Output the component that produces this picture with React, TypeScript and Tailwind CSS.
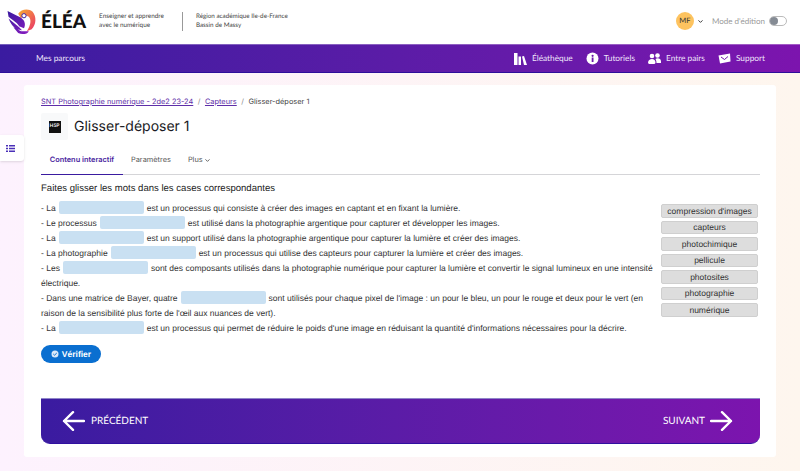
import React from "react";
import { ChevronDown } from "lucide-react";

const Blank = () => <span className="inline-block w-[85px] h-[13px] bg-[#c9e0f2] rounded-[2px] mx-[3px] align-[-3px]" />;

const Logo = () => (
  <svg width="32" height="27" viewBox="0 0 32 28" className="shrink-0">
    <defs>
      <linearGradient id="lg1" x1="0" y1="0" x2="1" y2="1">
        <stop offset="0" stopColor="#3a1aa0" />
        <stop offset="1" stopColor="#8a1cc0" />
      </linearGradient>
      <linearGradient id="lg2" x1="0" y1="0" x2="1" y2="1">
        <stop offset="0" stopColor="#f8b030" />
        <stop offset="1" stopColor="#e8306a" />
      </linearGradient>
    </defs>
    <path d="M11 6 C14 1 22 0 26 4 C30 9 30 17 25 22 L20 24 C24 18 25 12 22 9 C19 7 15 8 14 11 Z" fill="url(#lg2)" />
    <path d="M0 3 L14 10 C18 13 19 17 17 21 L12 19 C11 16 6 13 1 9 Z M1 11 L12 20 L15 23 L9 22 C6 20 3 16 1 11 Z M6 20 L14 24 L22 24 C21 27 15 28 11 26 Z" fill="url(#lg1)" />
    <circle cx="17" cy="8" r="2.2" fill="#fff" stroke="#3a1aa0" strokeWidth="1" />
  </svg>
);

const NavItem = ({ icon, label }: { icon: React.ReactNode; label: string }) => (
  <div className="flex items-center gap-[5px]">
    {icon}
    <span>{label}</span>
  </div>
);

const rows = ["compression d'images", "capteurs", "photochimique", "pellicule", "photosites", "photographie", "numérique"];

export default function App() {
  return (
    <div className="w-[800px] h-[471px] overflow-hidden flex flex-col bg-gradient-to-r from-[#fdf2fe] to-[#fef6ee] font-['Lato',sans-serif] relative [text-rendering:geometricPrecision]">
      <header className="h-[44px] bg-white flex items-center shrink-0 pl-[7px] pr-[13px] pb-[2px]">
        <Logo />
        <span className="ml-[2px] text-[19px] leading-none font-black text-[#111]">ÉLÉA</span>
        <div className="ml-[13px] text-[6.4px] leading-[9.5px] text-[#444]">
          <div>Enseigner et apprendre</div>
          <div>avec le numérique</div>
        </div>
        <div className="ml-[18px] w-px h-[19px] bg-[#999]" />
        <div className="ml-[13px] text-[6.3px] leading-[9.5px] text-[#444]">
          <div>Région académique Ile-de-France</div>
          <div>Bassin de Massy</div>
        </div>
        <div className="ml-auto flex items-center">
          <div className="w-[18px] h-[18px] rounded-full bg-[#fdc35f] text-[#333] text-[7.5px] flex items-center justify-center">MF</div>
          <ChevronDown size={7} strokeWidth={3} className="ml-[3px] text-[#222]" />
          <span className="ml-[8px] text-[8px] text-[#999]">Mode d'édition</span>
          <div className="ml-[4px] w-[18px] h-[10px] rounded-full border border-[#bbb] bg-white flex items-center">
            <div className="w-[8px] h-[8px] rounded-full bg-[#858b94]" />
          </div>
        </div>
      </header>
      <nav className="h-[29px] shrink-0 border-y border-t-white/30 border-b-[#2d0f9a] bg-gradient-to-r from-[#3a1ba0] to-[#7c14ae] flex items-center pl-[36px] pr-[35px] text-[#f0e6fb] text-[8.3px]">
        <span>Mes parcours</span>
        <div className="ml-auto flex items-center gap-[13px]">
          <NavItem label="Éléathèque" icon={
            <svg width="13" height="12" viewBox="0 0 13 12" fill="#fff"><path d="M0 0h3.500v12H0zM4.500 3.500h2.500v8.500H4.500zM8 3.500l2-.5L13 12h-3z" /></svg>
          } />
          <NavItem label="Tutoriels" icon={
            <svg width="13" height="13" viewBox="0 0 13 13"><circle cx="6.500" cy="6.500" r="6" fill="#fff" /><rect x="5.700" y="5.500" width="1.800" height="4.500" fill="#6a18aa" /><circle cx="6.600" cy="3.800" r="1.100" fill="#6a18aa" /></svg>
          } />
          <NavItem label="Entre pairs" icon={
            <svg width="13" height="11" viewBox="0 0 13 11" fill="#fff"><circle cx="4" cy="3" r="2.300" /><circle cx="9.500" cy="2.500" r="2.300" /><path d="M0 10c0-3 2-4 4-4s3.500 1 3.500 4l-1 1h-5.500zM8.500 10c0-2-.5-3-1-4 2-1.500 5.500-.8 5.500 2.500v1.500z" /></svg>
          } />
          <NavItem label="Support" icon={
            <svg width="13" height="11" viewBox="0 0 13 11"><path d="M0.500 2.500L12 0.500L12.500 8.500L2 10.500Z" fill="#fff" /><path d="M3 4l3.500 2.500L10 3.500" fill="none" stroke="#7016ac" strokeWidth="1" /></svg>
          } />
        </div>
      </nav>

      <div className="absolute left-0 top-[135px] w-[24px] h-[26px] bg-white rounded-r-[3px] flex items-center pl-[6px] shadow-sm">
        <svg width="9" height="7" viewBox="0 0 9 7" fill="#4a30b8"><path d="M0 0h2v1.500H0zM3 0h6v1.500H3zM0 2.700h2v1.500H0zM3 2.700h6v1.500H3zM0 5.400h2v1.500H0zM3 5.400h6v1.500H3z" /></svg>
      </div>

      <main className="mt-[12px] mx-[24px] h-[372px] bg-white rounded-[3px] pl-[17px] pr-[16px] pt-[11px] flex flex-col">
        <div className="text-[7.4px] leading-[12px] font-['Inter',sans-serif] flex items-center text-[#444]">
          <span className="text-[#5e2ea8] underline">SNT Photographie numérique - 2de2 23-24</span>
          <span className="mx-[4.5px] text-[#888]">/</span>
          <span className="text-[#5e2ea8] underline">Capteurs</span>
          <span className="mx-[4.5px] text-[#888]">/</span>
          <span>Glisser-déposer 1</span>
        </div>
        <div className="flex items-center mt-[5px] h-[27px]">
          <div className="w-[27px] h-[27px] bg-[#f8f9fa] rounded-[2px] flex items-center justify-center">
            <div className="w-[12px] h-[12px] bg-[#111] text-white text-[5px] font-bold leading-none flex items-center justify-center">H5P</div>
          </div>
          <h1 className="ml-[6px] text-[14px] font-normal leading-none text-[#1a1a24] font-['Inter',sans-serif]">Glisser-déposer 1</h1>
        </div>
        <div className="mt-[6px] h-[29px] border-b border-[#d5d5d8] flex text-[7.4px] font-['Inter',sans-serif] text-[#555]">
          <div className="w-[82px] h-[29px] border-b-[1.5px] border-[#3a1ba0] flex items-center justify-center font-semibold text-[#4a1fa0]">Contenu interactif</div>
          <div className="ml-[8px] flex items-center">Paramètres</div>
          <div className="ml-[17px] flex items-center">Plus<ChevronDown size={7} strokeWidth={3} className="ml-[1px]" /></div>
        </div>
        <div className="mt-[8px] text-[9.55px] leading-[12px] font-['Liberation_Sans',sans-serif] text-[#222]">Faites glisser les mots dans les cases correspondantes</div>

        <div className="mt-[6px] flex font-['Liberation_Sans',sans-serif] text-[8.5px] leading-[15px] text-[#333]">
          <div className="w-[612px] shrink-0">
            <div>- La<Blank />est un processus qui consiste à créer des images en captant et en fixant la lumière.</div>
            <div>- Le processus<Blank />est utilisé dans la photographie argentique pour capturer et développer les images.</div>
            <div>- La<Blank />est un support utilisé dans la photographie argentique pour capturer la lumière et créer des images.</div>
            <div>- La photographie<Blank />est un processus qui utilise des capteurs pour capturer la lumière et créer des images.</div>
            <div>- Les<Blank />sont des composants utilisés dans la photographie numérique pour capturer la lumière et convertir le signal lumineux en une intensité électrique.</div>
            <div>- Dans une matrice de Bayer, quatre<Blank />sont utilisés pour chaque pixel de l'image : un pour le bleu, un pour le rouge et deux pour le vert (en raison de la sensibilité plus forte de l'œil aux nuances de vert).</div>
            <div>- La<Blank />est un processus qui permet de réduire le poids d'une image en réduisant la quantité d'informations nécessaires pour la décrire.</div>
          </div>
          <div className="ml-[8px] w-[97px] flex flex-col gap-[3px] mt-[3px]">
            {rows.map((r) => (
              <div key={r} className="h-[13.5px] bg-[#dddddd] border border-[#cfcfcf] rounded-[2px] flex items-center justify-center text-[8.5px] leading-none text-[#333]">{r}</div>
            ))}
          </div>
        </div>

        <div className="mt-[9px] w-[60px] h-[18px] rounded-full bg-[#0a6fd0] text-white text-[8.500px] font-bold font-['Liberation_Sans',sans-serif] flex items-center justify-center gap-[3px]">
          <svg width="8" height="8" viewBox="0 0 8 8"><circle cx="4" cy="4" r="3.500" fill="#dbe9f8" /><path d="M2.300 4l1.200 1.200L5.800 3" fill="none" stroke="#0a6fd0" strokeWidth="1" /></svg>
          Vérifier
        </div>

        <div className="mt-[35px] h-[46px] rounded-b-[9px] border-t border-b border-t-[#8f86c8] border-b-[#3010a0] bg-gradient-to-r from-[#3a1ba0] to-[#7c14ae] flex items-center justify-between pl-[21px] pr-[27px] text-white text-[10px]">
          <div className="flex items-center gap-[6px]">
            <svg width="23" height="20" viewBox="0 0 23 20" fill="none" stroke="#fff" strokeWidth="2.400" strokeLinecap="round" strokeLinejoin="round"><path d="M22 10H2M11 1.200L2 10l9 8.800" /></svg>
            <span>PRÉCÉDENT</span>
          </div>
          <div className="flex items-center gap-[5px]">
            <span>SUIVANT</span>
            <svg width="23" height="20" viewBox="0 0 23 20" fill="none" stroke="#fff" strokeWidth="2.400" strokeLinecap="round" strokeLinejoin="round"><path d="M1 10h20M12 1.200L21 10l-9 8.800" /></svg>
          </div>
        </div>
      </main>
    </div>
  );
}
